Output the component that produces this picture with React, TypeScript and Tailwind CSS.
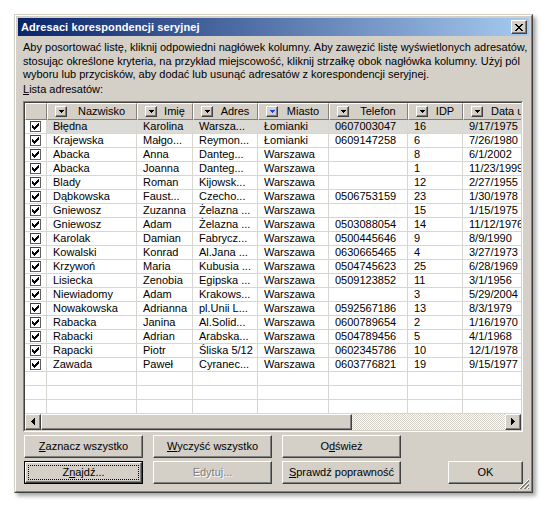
import React from "react";

type Row = [string, string, string, string, string, string, string];

const rows: Row[] = [
  ["Błędna", "Karolina", "Warsza...", "Łomianki", "0607003047", "16", "9/17/1975"],
  ["Krajewska", "Małgo...", "Reymon...", "Łomianki", "0609147258", "6", "7/26/1980"],
  ["Abacka", "Anna", "Danteg...", "Warszawa", "", "8", "6/1/2002"],
  ["Abacka", "Joanna", "Danteg...", "Warszawa", "", "1", "11/23/1999"],
  ["Blady", "Roman", "Kijowsk...", "Warszawa", "", "12", "2/27/1955"],
  ["Dąbkowska", "Faust...", "Czecho...", "Warszawa", "0506753159", "23", "1/30/1978"],
  ["Gniewosz", "Zuzanna", "Żelazna ...", "Warszawa", "", "15", "1/15/1975"],
  ["Gniewosz", "Adam", "Żelazna ...", "Warszawa", "0503088054", "14", "11/12/1976"],
  ["Karolak", "Damian", "Fabrycz...", "Warszawa", "0500445646", "9", "8/9/1990"],
  ["Kowalski", "Konrad", "Al.Jana ...", "Warszawa", "0630665465", "4", "3/27/1973"],
  ["Krzywoń", "Maria", "Kubusia ...", "Warszawa", "0504745623", "25", "6/28/1969"],
  ["Lisiecka", "Zenobia", "Egipska ...", "Warszawa", "0509123852", "11", "3/1/1956"],
  ["Niewiadomy", "Adam", "Krakows...", "Warszawa", "", "3", "5/29/2004"],
  ["Nowakowska", "Adrianna", "pl.Unii L...", "Warszawa", "0592567186", "13", "8/3/1979"],
  ["Rabacka", "Janina", "Al.Solid...", "Warszawa", "0600789654", "2", "1/16/1970"],
  ["Rabacki", "Adrian", "Arabska...", "Warszawa", "0504789456", "5", "4/1/1968"],
  ["Rapacki", "Piotr", "Śliska 5/12", "Warszawa", "0602345786", "10", "12/1/1978"],
  ["Zawada", "Paweł", "Cyranec...", "Warszawa", "0603776821", "19", "9/15/1977"],
];

const headers = ["Nazwisko", "Imię", "Adres", "Miasto", "Telefon", "IDP", "Data urodzenia"];
const widths = ["w-[90px]", "w-[56px]", "w-[65px]", "w-[71px]", "w-[79px]", "w-[55px]", "w-[90px]"];

const raised =
  "border border-t-white border-l-white border-r-[#404040] border-b-[#404040] shadow-[inset_-1px_-1px_0_#808080]";

function DropBtn({ blue }: { blue?: boolean }) {
  return (
    <div className={`w-[12px] h-[11px] shrink-0 bg-[#d4d0c8] flex items-center justify-center ${raised}`}>
      <svg width="5" height="3" viewBox="0 0 5 3" shapeRendering="crispEdges">
        <path d="M0 0h5v1H0zM1 1h3v1H1zM2 2h1v1H2z" fill={blue ? "#1f3fd8" : "#000"} />
      </svg>
    </div>
  );
}

function Check() {
  return (
    <div className="w-[11px] h-[11px] bg-white border border-t-[#404040] border-l-[#404040] border-r-[#606060] border-b-[#606060] flex items-center justify-center">
      <svg width="7" height="7" viewBox="0 0 7 7" shapeRendering="crispEdges">
        <path d="M6 0h1v1H6zM5 1h2v1H5zM0 2h1v1H0zM4 2h3v1H4zM0 3h2v1H0zM3 3h3v1H3zM0 4h5v1H0zM1 5h3v1H1zM2 6h1v1H2z" fill="#000" />
      </svg>
    </div>
  );
}

function Btn({
  children,
  w = "w-[119px]",
  focus,
  disabled,
}: {
  children: React.ReactNode;
  w?: string;
  focus?: boolean;
  disabled?: boolean;
}) {
  const text = disabled ? "text-[#808080] [text-shadow:1px_1px_0_#fff]" : "text-black";
  if (focus) {
    return (
      <div className={`${w} h-[23px] border border-black bg-[#d4d0c8] flex`}>
        <div className={`flex-1 flex p-[2px] ${raised}`}>
          <div className={`flex-1 border border-dotted border-black flex items-center justify-center text-[11px] leading-[13px] ${text}`}>
            {children}
          </div>
        </div>
      </div>
    );
  }
  return (
    <div className={`${w} h-[23px] bg-[#d4d0c8] flex items-center justify-center text-[11px] leading-[13px] ${text} ${raised}`}>
      {children}
    </div>
  );
}

export default function App() {
  return (
    <div className="w-[548px] h-[509px] bg-white pt-[14px] pl-[14px] font-['Liberation_Sans',Arial,sans-serif] text-black">
      <div className="relative w-[519px] h-[479px] bg-[#d4d0c8] border border-t-[#d4d0c8] border-l-[#d4d0c8] border-r-[#404040] border-b-[#404040] shadow-[3px_3px_4px_rgba(0,0,0,0.35)]">
        <div className="w-full h-full border border-t-white border-l-white border-r-[#808080] border-b-[#808080] p-[2px] flex flex-col">
          {/* title bar */}
          <div className="h-[18px] shrink-0 bg-[linear-gradient(to_right,#0a246a,#a6caf0)] flex items-center pl-[3px] pr-[2px]">
            <span className="text-white font-bold text-[11px] leading-[13px] tracking-[0.1px]">
              Adresaci korespondencji seryjnej
            </span>
            <div className={`ml-auto w-[16px] h-[14px] bg-[#d4d0c8] flex items-center justify-center ${raised}`}>
              <svg width="8" height="7" viewBox="0 0 8 7" shapeRendering="crispEdges">
                <path
                  d="M0 0h2v1H0zM6 0h2v1H6zM1 1h2v1H1zM5 1h2v1H5zM2 2h4v1H2zM3 3h2v1H3zM2 4h4v1H2zM1 5h2v1H1zM5 5h2v1H5zM0 6h2v1H0zM6 6h2v1H6z"
                  fill="#000"
                />
              </svg>
            </div>
          </div>

          {/* client area */}
          <div className="flex-1 flex flex-col pl-[5px] pr-[6px] pt-[5px]">
            <div className="text-[11px] leading-[13.5px] whitespace-nowrap">
              <div>Aby posortować listę, kliknij odpowiedni nagłówek kolumny. Aby zawęzić listę wyświetlonych adresatów,</div>
              <div>stosując określone kryteria, na przykład miejscowość, kliknij strzałkę obok nagłówka kolumny. Użyj pól</div>
              <div>wyboru lub przycisków, aby dodać lub usunąć adresatów z korespondencji seryjnej.</div>
            </div>
            <div className="text-[11px] leading-[13px] mt-[1px]">
              <u>L</u>ista adresatów:
            </div>

            {/* list */}
            <div className="mt-[5px] w-[500px] h-[331px] border border-t-[#808080] border-l-[#808080] border-r-white border-b-white">
              <div className="w-full h-full border border-t-[#404040] border-l-[#404040] border-r-[#d4d0c8] border-b-[#d4d0c8] bg-white flex flex-col">
                <div className="flex-1 overflow-hidden">
                  {/* header */}
                  <div className="flex h-[17px] w-[620px]">
                    <div className="w-[22px] h-[17px] bg-[#d4d0c8] border-t border-l border-t-white border-l-white border-r border-b border-r-[#808080] border-b-[#808080]" />
                    {headers.map((h, i) => (
                      <div
                        key={h}
                        className={`${widths[i]} h-[17px] bg-[#d4d0c8] flex items-center pl-[7px] border-t border-l border-t-white border-l-white border-r border-b border-r-[#808080] border-b-[#808080] text-[11px] leading-[13px] whitespace-nowrap overflow-hidden`}
                      >
                        <DropBtn blue={i === 3} />
                        {i === 6 ? (
                          <span className="pl-[8px]">{h}</span>
                        ) : (
                          <span className="flex-1 text-center">{h}</span>
                        )}
                      </div>
                    ))}
                  </div>
                  {/* rows */}
                  {rows.map((r, ri) => (
                    <div key={ri} className="flex h-[14px] w-[620px]">
                      <div className="w-[22px] h-[14px] border-r border-b border-[#d8d6d0] flex items-center justify-center">
                        <Check />
                      </div>
                      {r.map((c, ci) => (
                        <div
                          key={ci}
                          className={`${widths[ci]} h-[14px] border-r border-b border-[#d8d6d0] pl-[6px] text-[11px] leading-[13px] whitespace-nowrap overflow-hidden ${ri === 0 ? "bg-[#dcdad5]" : ""}`}
                        >
                          {c}
                        </div>
                      ))}
                    </div>
                  ))}
                  {[0, 1, 2].map((e) => (
                    <div key={"e" + e} className="flex h-[14px] w-[620px]">
                      <div className="w-[22px] h-[14px] border-r border-b border-[#d8d6d0]" />
                      {widths.map((w, ci) => (
                        <div key={ci} className={`${w} h-[14px] border-r border-b border-[#d8d6d0]`} />
                      ))}
                    </div>
                  ))}
                </div>
                {/* horizontal scrollbar */}
                <div className="h-[16px] shrink-0 flex">
                  <div className={`w-[16px] h-[16px] bg-[#d4d0c8] flex items-center justify-center ${raised}`}>
                    <svg width="4" height="7" viewBox="0 0 4 7" shapeRendering="crispEdges">
                      <path d="M3 0h1v7H3zM2 1h1v5H2zM1 2h1v3H1zM0 3h1v1H0z" fill="#000" />
                    </svg>
                  </div>
                  <div className={`w-[311px] h-[16px] bg-[#d4d0c8] ${raised}`} />
                  <div className="flex-1 h-[16px] bg-[repeating-conic-gradient(#ffffff_0%_25%,#d4d0c8_0%_50%)] bg-[length:2px_2px]" />
                  <div className={`w-[16px] h-[16px] bg-[#d4d0c8] flex items-center justify-center ${raised}`}>
                    <svg width="4" height="7" viewBox="0 0 4 7" shapeRendering="crispEdges">
                      <path d="M0 0h1v7H0zM1 1h1v5H1zM2 2h1v3H2zM3 3h1v1H3z" fill="#000" />
                    </svg>
                  </div>
                </div>
              </div>
            </div>

            {/* buttons */}
            <div className="mt-[3px] pl-[1px] flex flex-col gap-[3px]">
              <div className="flex gap-[10px]">
                <Btn>
                  <u>Z</u>aznacz wszystko
                </Btn>
                <Btn>
                  <u>W</u>yczyść wszystko
                </Btn>
                <Btn>
                  O<u>d</u>śwież
                </Btn>
              </div>
              <div className="flex gap-[10px]">
                <Btn focus>
                  Z<u>n</u>ajdź...
                </Btn>
                <Btn disabled>Edytuj...</Btn>
                <Btn>
                  <u>S</u>prawdź poprawność
                </Btn>
                <div className="ml-auto">
                  <Btn w="w-[75px]">OK</Btn>
                </div>
              </div>
            </div>
          </div>
        </div>
        {/* size grip */}
        <svg
          className="absolute right-[2px] bottom-[2px]"
          width="12"
          height="12"
          viewBox="0 0 12 12"
          shapeRendering="crispEdges"
        >
          <path d="M11 1L1 11M11 5L5 11M11 9L9 11" stroke="#ffffff" strokeWidth="1" />
          <path d="M11 2L2 11M11 3L3 11M11 6L6 11M11 7L7 11M11 10L10 11" stroke="#808080" strokeWidth="1" />
        </svg>
      </div>
    </div>
  );
}
